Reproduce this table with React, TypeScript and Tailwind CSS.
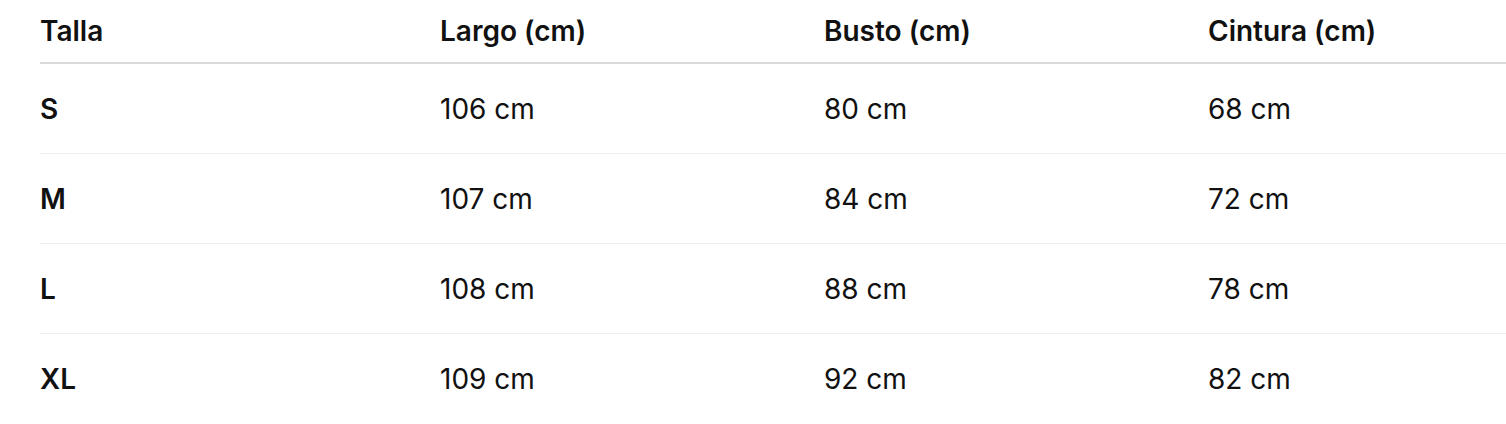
const rows = [
  { size: "S", largo: "106 cm", busto: "80 cm", cintura: "68 cm" },
  { size: "M", largo: "107 cm", busto: "84 cm", cintura: "72 cm" },
  { size: "L", largo: "108 cm", busto: "88 cm", cintura: "78 cm" },
  { size: "XL", largo: "109 cm", busto: "92 cm", cintura: "82 cm" },
];

export default function App() {
  return (
    <div className="bg-white pl-10 text-[#111111] font-['Inter',sans-serif] text-[28px] leading-[34px] w-[1506px] h-[424px] overflow-hidden">
      <div className="grid grid-cols-[400px_384px_384px_1fr] h-[64px] items-center border-b-2 border-[#dadada] font-semibold">
        <div>Talla</div>
        <div>Largo (cm)</div>
        <div>Busto (cm)</div>
        <div>Cintura (cm)</div>
      </div>
      {rows.map((r, i) => (
        <div
          key={r.size}
          className={
            i < rows.length - 1
              ? "grid grid-cols-[400px_384px_384px_1fr] h-[90px] items-center border-b border-[#eeeeee]"
              : "grid grid-cols-[400px_384px_384px_1fr] h-[90px] items-center"
          }
        >
          <div className="font-semibold">{r.size}</div>
          <div>{r.largo}</div>
          <div>{r.busto}</div>
          <div>{r.cintura}</div>
        </div>
      ))}
    </div>
  );
}
